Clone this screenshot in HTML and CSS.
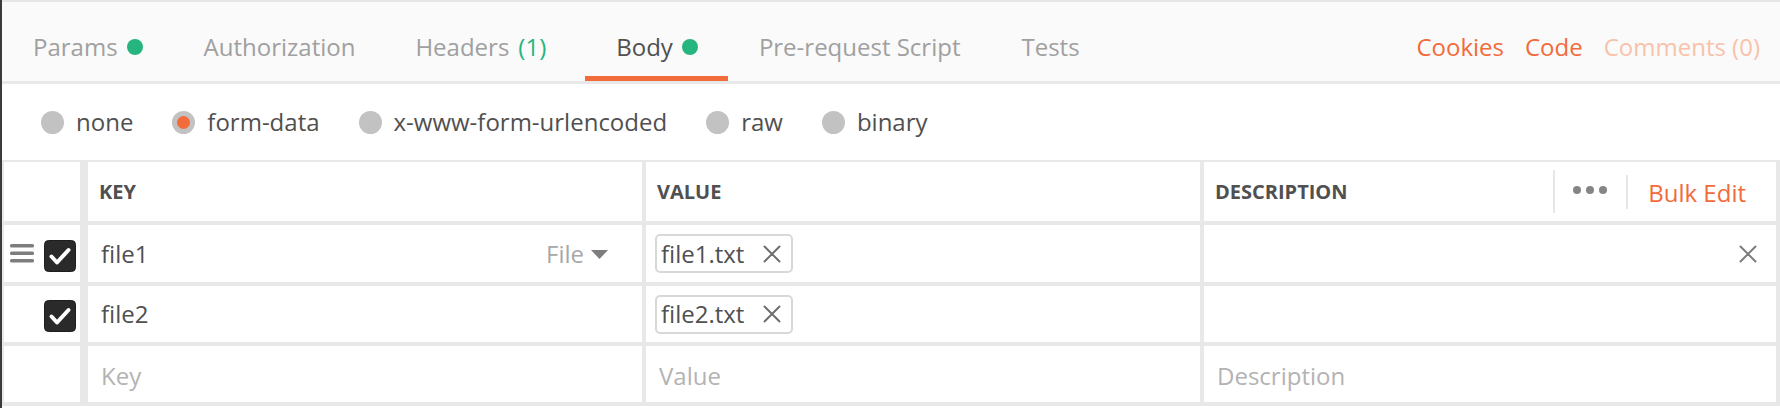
FILE: index.html
```html
<!DOCTYPE html>
<html>
<head>
<meta charset="utf-8">
<link rel="stylesheet" href="styles.css">
</head>
<body>
<div class="app">
  <div class="tabbar">
    <div class="tabs">
      <div class="tab">Params <span class="dot"></span></div>
      <div class="tab auth">Authorization</div>
      <div class="tab">Headers <span class="count">(1)</span></div>
      <div class="tab active">Body <span class="dot"></span></div>
      <div class="tab">Pre-request Script</div>
      <div class="tab last">Tests</div>
    </div>
    <div class="actions">
      <span class="link">Cookies</span>
      <span class="link">Code</span>
      <span class="link faded">Comments (0)</span>
    </div>
  </div>

  <div class="modes">
    <label class="mode"><span class="radio"></span>none</label>
    <label class="mode"><span class="radio checked"></span>form-data</label>
    <label class="mode"><span class="radio"></span>x-www-form-urlencoded</label>
    <label class="mode"><span class="radio"></span>raw</label>
    <label class="mode"><span class="radio"></span>binary</label>
  </div>

  <div class="table">
    <div class="cell first head"></div>
    <div class="cell head">KEY</div>
    <div class="cell head">VALUE</div>
    <div class="cell head desc-head">
      <span class="grow">DESCRIPTION</span>
      <span class="sep tall"></span>
      <span class="more"><i></i><i></i><i></i></span>
      <span class="sep"></span>
      <span class="bulk">Bulk Edit</span>
    </div>

    <div class="cell first">
      <svg class="drag" width="24" height="19" viewBox="0 0 24 19"><rect x="0" y="0" width="24" height="3.5" rx="1.5" fill="#7d7d7d"/><rect x="0" y="7.5" width="24" height="3.5" rx="1.5" fill="#7d7d7d"/><rect x="0" y="15" width="24" height="3.5" rx="1.5" fill="#7d7d7d"/></svg>
      <svg class="check" width="32" height="32" viewBox="0 0 32 32"><rect x="0.5" y="0.5" width="31" height="31" rx="4" fill="#2a2a2a" stroke="#1e1e1e"/><path d="M7.5 16.5 L13 22.5 L24.5 10" fill="none" stroke="#fff" stroke-width="4" stroke-linecap="round" stroke-linejoin="round"/></svg>
    </div>
    <div class="cell input key">
      <span class="grow">file1</span>
      <span class="type">File</span>
      <svg class="caret" width="17" height="9" viewBox="0 0 17 9"><path d="M0 0 H17 L8.5 9 Z" fill="#7d7d7d"/></svg>
    </div>
    <div class="cell input value">
      <span class="chip">file1.txt<svg class="x" width="18" height="18" viewBox="0 0 18 18"><path d="M1.5 1.5 L16.5 16.5 M16.5 1.5 L1.5 16.5" stroke="#6f6f6f" stroke-width="2" stroke-linecap="round"/></svg></span>
    </div>
    <div class="cell input end">
      <svg class="x" width="18" height="18" viewBox="0 0 18 18"><path d="M1.5 1.5 L16.5 16.5 M16.5 1.5 L1.5 16.5" stroke="#7d7d7d" stroke-width="2" stroke-linecap="round"/></svg>
    </div>

    <div class="cell first">
      <svg class="drag hidden" width="24" height="19" viewBox="0 0 24 19"><rect x="0" y="0" width="24" height="3.5" rx="1.5" fill="#7d7d7d"/></svg>
      <svg class="check" width="32" height="32" viewBox="0 0 32 32"><rect x="0.5" y="0.5" width="31" height="31" rx="4" fill="#2a2a2a" stroke="#1e1e1e"/><path d="M7.5 16.5 L13 22.5 L24.5 10" fill="none" stroke="#fff" stroke-width="4" stroke-linecap="round" stroke-linejoin="round"/></svg>
    </div>
    <div class="cell input key"><span class="grow">file2</span></div>
    <div class="cell input value">
      <span class="chip">file2.txt<svg class="x" width="18" height="18" viewBox="0 0 18 18"><path d="M1.5 1.5 L16.5 16.5 M16.5 1.5 L1.5 16.5" stroke="#6f6f6f" stroke-width="2" stroke-linecap="round"/></svg></span>
    </div>
    <div class="cell input"></div>

    <div class="cell first"></div>
    <div class="cell input placeholder">Key</div>
    <div class="cell input placeholder">Value</div>
    <div class="cell input placeholder">Description</div>
  </div>
</div>
</body>
</html>
```

FILE: styles.css
```css
* { box-sizing: border-box; }
html, body { margin: 0; padding: 0; background: #fff; }
body {
  font-family: "Open Sans", "Liberation Sans", sans-serif;
  font-size: 24px;
  color: #505050;
  width: 1780px;
  height: 408px;
  overflow: hidden;
}
.app {
  border-left: 2px solid #3b3b3b;
  height: 408px;
}
.tabbar {
  display: flex;
  justify-content: space-between;
  height: 84px;
  background: #fafafa;
  border-top: 2px solid #e6e6e6;
  border-bottom: 3px solid #e8e8e8;
}
.tabs { display: flex; }
.tab {
  display: flex;
  align-items: center;
  gap: 9px;
  height: 79px;
  padding: 15px 30px 0 31px;
  border-bottom: 5px solid transparent;
  color: #a0a0a0;
  line-height: 32px;
  white-space: nowrap;
}
.tab.auth { padding-right: 29px; }
.tab.active {
  color: #505050;
  border-bottom-color: #f26b3a;
  margin-left: 9px;
}
.tab.last { padding-left: 31px; }
.dot {
  width: 16px;
  height: 16px;
  border-radius: 50%;
  background: #26b47f;
}
.count { color: #26b47f; margin-left: 0; }
.actions {
  display: flex;
  align-items: center;
  gap: 21px;
  padding: 15px 20px 5px 0;
  line-height: 32px;
}
.link { color: #f26b3a; }
.link.faded { color: #f8c2ab; }

.modes {
  display: flex;
  align-items: center;
  gap: 39px;
  height: 76px;
  padding-left: 39px;
}
.mode {
  display: flex;
  align-items: center;
  gap: 12px;
  line-height: 32px;
}
.radio {
  width: 23px;
  height: 23px;
  border-radius: 50%;
  background: #c2c2c2;
}
.radio.checked {
  background: #f26b3a;
  border: 5px solid #c2c2c2;
}

.table {
  display: grid;
  grid-template-columns: 80px 554px 554px 1fr;
  grid-template-rows: 59px 57px 56px 56px;
  gap: 4px;
  padding: 2px 4px 4px 2px;
  background: #e8e8e8;
}
.cell {
  background: #fff;
  display: flex;
  align-items: center;
  line-height: 32px;
  min-width: 0;
}
.cell.first {
  margin-right: 4px;
  padding-left: 6px;
  gap: 10px;
}
.drag.hidden { visibility: hidden; }
.check { margin-top: 4px; }
.head {
  font-size: 20px;
  font-weight: 700;
  color: #505050;
  padding-left: 11px;
}
.head.first { padding-left: 0; }
.grow { flex: 1; }
.desc-head { padding-right: 30px; }
.sep {
  width: 2px;
  height: 34px;
  background: #e6e6e6;
  margin: 0 20px 0 19px;
}
.sep.tall { height: 43px; margin: 0 18px 0 0; }
.more { display: flex; gap: 5px; margin-top: -4px; }
.more i {
  display: block;
  width: 8px;
  height: 8px;
  border-radius: 50%;
  background: #858585;
}
.bulk {
  font-size: 24px;
  font-weight: 400;
  color: #f26b3a;
  margin-top: 2px;
}
.input {
  padding-left: 13px;
  padding-right: 34px;
}
.type { color: #a8a8a8; margin-right: 7px; }
.caret { margin-top: 1px; }
.input.value { padding-left: 9px; }
.chip {
  display: inline-flex;
  align-items: center;
  gap: 19px;
  height: 39px;
  padding: 0 10px 0 4px;
  border: 2px solid #d8d8d8;
  border-radius: 5px;
  color: #505050;
}
.input.end { justify-content: flex-end; padding-right: 19px; }
.placeholder { color: #b3b3b3; padding-top: 4px; }
```
